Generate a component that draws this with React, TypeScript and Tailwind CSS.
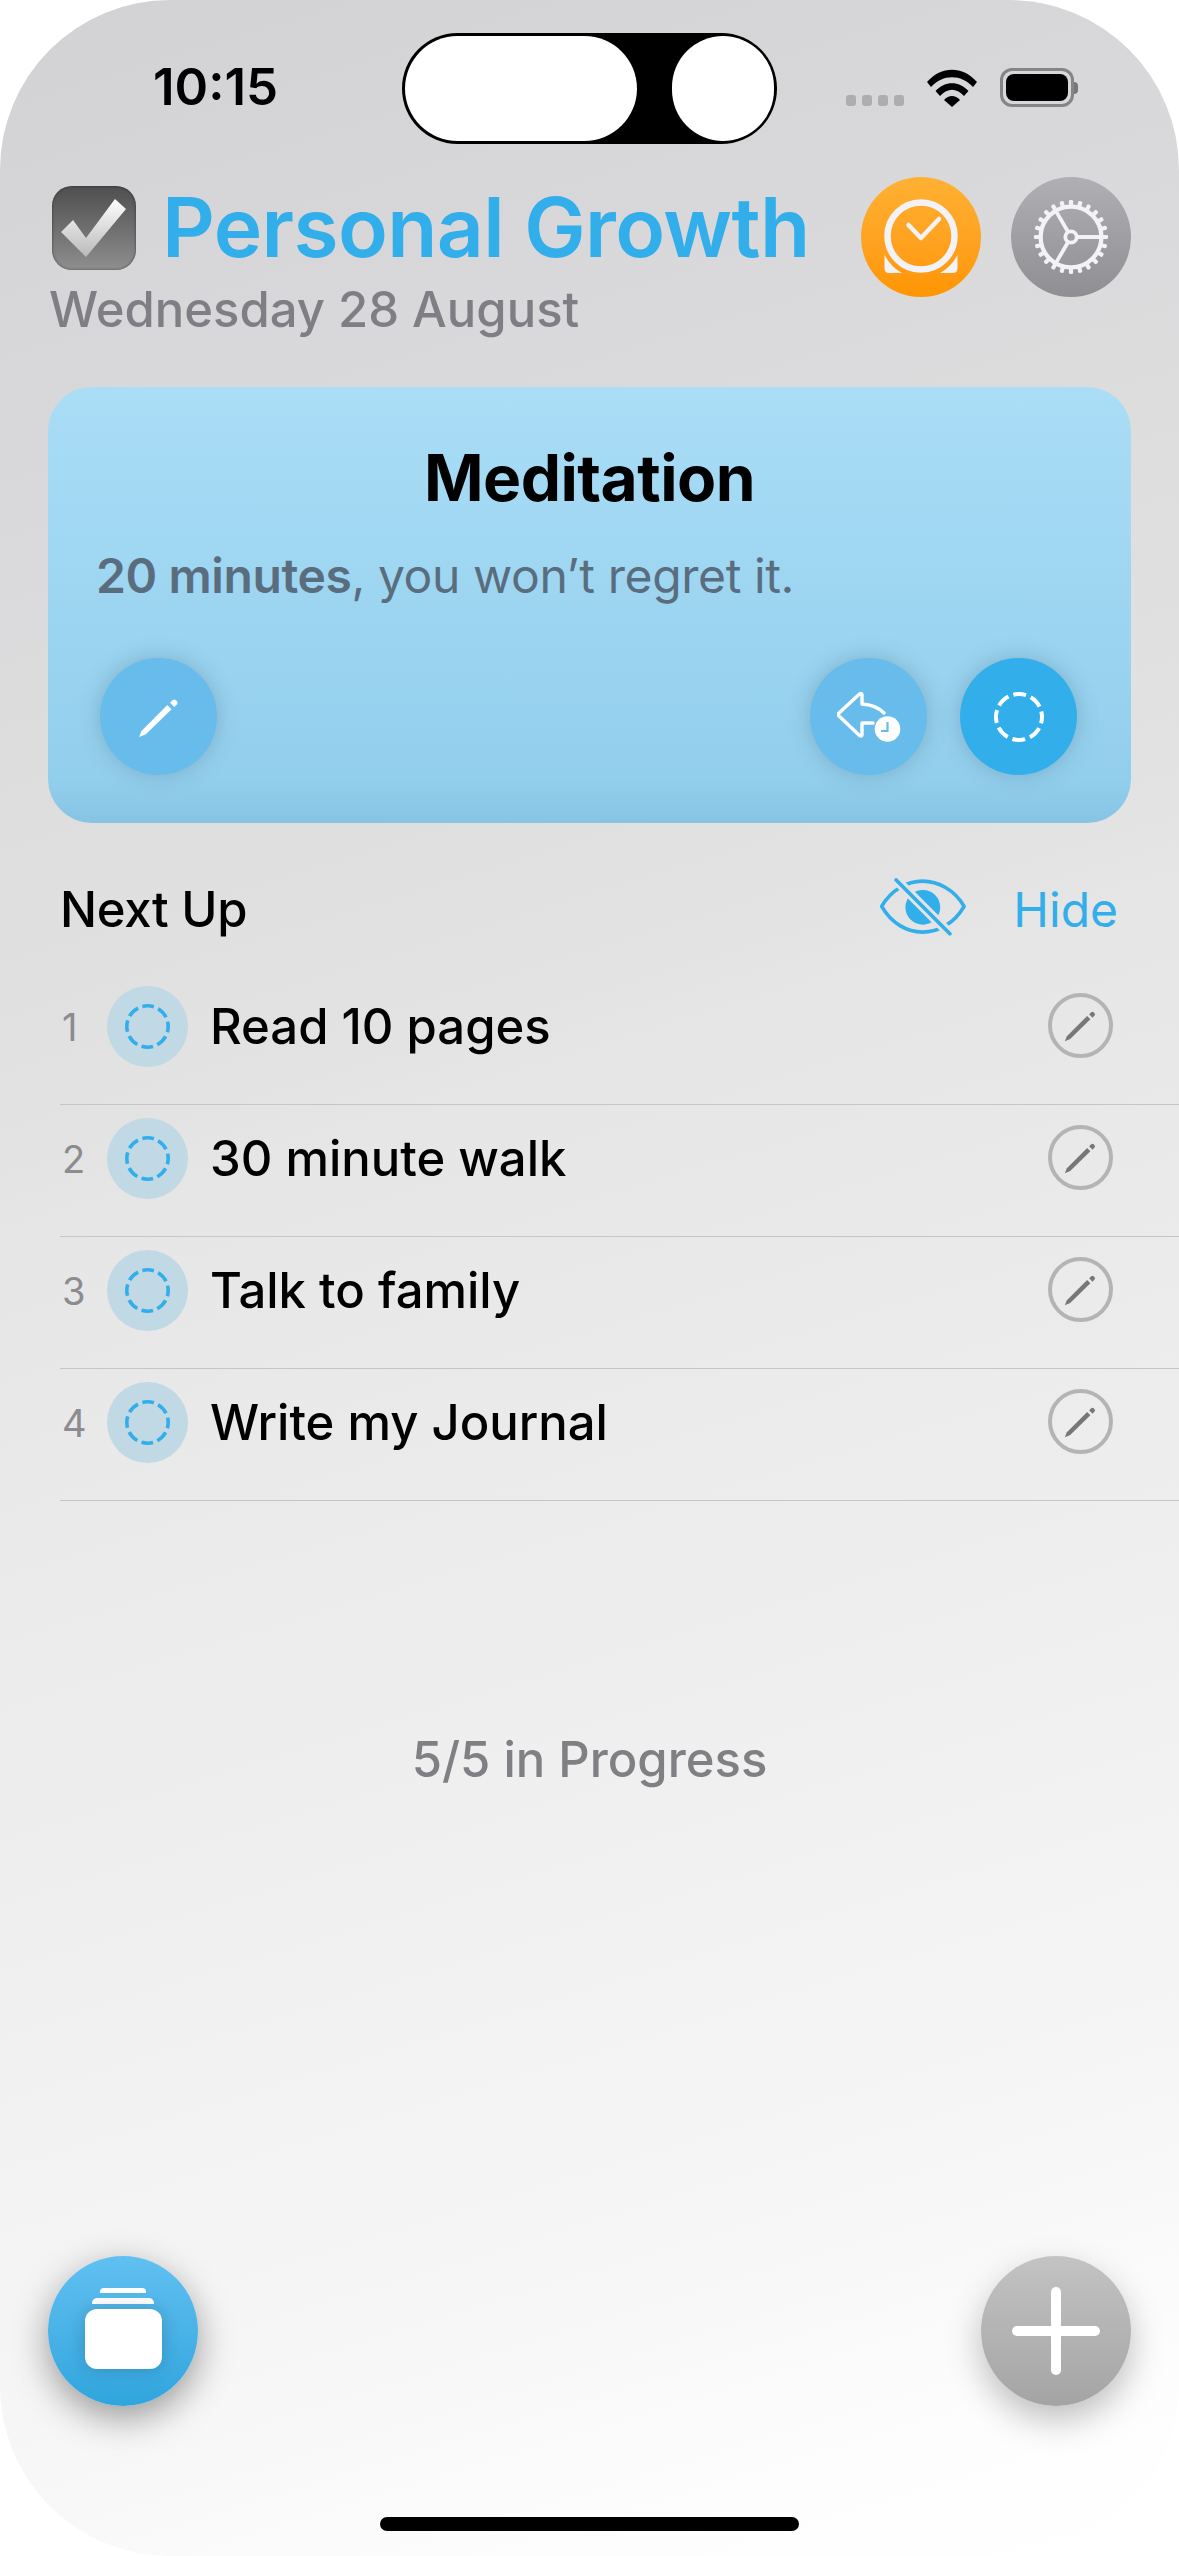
const tasks = ["Read 10 pages", "30 minute walk", "Talk to family", "Write my Journal"];

const gearTeeth = Array.from({ length: 24 }, (_, i) => i * 15);

const PencilIcon = ({ className }: { className: string }) => (
  <svg viewBox="0 0 40 40" className={className} fill="currentColor">
    <path d="M1 39 L3.5 33 L28 8.5 L32 12.5 L7.5 36.5 Z" />
    <path d="M30.5 6.5 L33 4 Q34.5 2.5 36 4 L37 5 Q38.5 6.5 37 8 L34.5 10.5 Z" />
  </svg>
);

const DashedCircle = ({ size, stroke, color }: { size: number; stroke: number; color: string }) => {
  const r = (size - stroke) / 2;
  const pitch = (2 * Math.PI * r) / 8;
  const dash = pitch * 0.72;
  return (
    <svg width={size} height={size} viewBox={`0 0 ${size} ${size}`} fill="none">
      <circle
        cx={size / 2}
        cy={size / 2}
        r={r}
        stroke={color}
        strokeWidth={stroke}
        strokeDasharray={`${dash} ${pitch - dash}`}
        strokeDashoffset={dash / 2}
      />
    </svg>
  );
};

const CheckTile = () => (
  <div className="w-[84px] h-[84px] shrink-0 rounded-[20px] bg-gradient-to-b from-[#4f4f4f] to-[#8f8f8f] shadow-[inset_0_0_3px_rgba(0,0,0,0.5)]">
    <svg viewBox="0 0 84 84" className="w-full h-full">
      <defs>
        <linearGradient id="checkFill" x1="0" y1="0" x2="0" y2="1">
          <stop offset="0" stopColor="#ffffff" />
          <stop offset="1" stopColor="#b9b9b9" />
        </linearGradient>
      </defs>
      <path d="M9 46 L21 34 L34 52 L63 13 L74 23 L34 71 Z" fill="url(#checkFill)" />
    </svg>
  </div>
);

const AlarmIcon = () => (
  <svg viewBox="0 0 80 84" className="w-[80px] h-[84px]" fill="none" stroke="#f2f2f7">
    <circle cx="40" cy="41" r="33.5" strokeWidth="6.5" />
    <path d="M27.5 30 L40 43 L58 24" strokeWidth="4.5" strokeLinecap="round" strokeLinejoin="round" />
    <path d="M3.5 60 Q10 72 21 78 H8 Q3.5 78 3.5 73 Z" fill="#f2f2f7" stroke="none" />
    <path d="M76.5 60 Q70 72 59 78 H72 Q76.5 78 76.5 73 Z" fill="#f2f2f7" stroke="none" />
  </svg>
);

const GearIcon = () => (
  <svg viewBox="0 0 80 80" className="w-[76px] h-[76px]" fill="none" stroke="#f2f2f7">
    <circle cx="40" cy="40" r="32" strokeWidth="4.5" />
    {gearTeeth.map((deg) => (
      <rect key={deg} x="37.8" y="1" width="4.4" height="8" rx="1.4" fill="#f2f2f7" stroke="none" transform={`rotate(${deg} 40 40)`} />
    ))}
    <circle cx="40" cy="40" r="6" strokeWidth="4" />
    <path d="M46 40 H72 M37 34.8 L24 12.5 M37 45.2 L24 67.5" strokeWidth="4" />
  </svg>
);

const SnoozeIcon = () => (
  <svg viewBox="0 0 64 52" className="w-[64px] h-[52px]" fill="none">
    <path
      d="M47 22 C41 16 34 13.5 25 13 V4 Q25 1.5 22.5 3 L2 22 Q0.5 23.5 2 25 L22.5 44.5 Q25 46 25 43.5 V32 H36"
      stroke="#fff"
      strokeWidth="3.4"
      strokeLinecap="round"
      strokeLinejoin="round"
    />
    <circle cx="50.5" cy="38" r="12.8" fill="#fff" />
    <path d="M50.5 31 V40 H44" stroke="#68bcec" strokeWidth="2.2" />
  </svg>
);

const EyeOffIcon = () => (
  <svg viewBox="0 0 90 60" className="w-[87px] h-[58px]" fill="none" strokeLinecap="round">
    <path
      d="M1.7 29.3 C12 12 28 3.3 44 3.3 C60 3.3 77 12 87 29.3 C77 47 60 56 44 56 C28 56 12 47 1.7 29.3 Z"
      stroke="#32aeea"
      strokeWidth="3.8"
      strokeLinejoin="round"
    />
    <circle cx="44.3" cy="30.3" r="18" fill="#32aeea" />
    <path d="M16.7 2 L72.3 57.7" stroke="#e3e3e4" strokeWidth="10" strokeLinecap="butt" />
    <path d="M16.7 2 L72.3 57.7" stroke="#32aeea" strokeWidth="3.8" />
  </svg>
);

const CardButton = ({ className, children }: { className: string; children: React.ReactNode }) => (
  <div className={`w-[117px] h-[117px] rounded-full flex items-center justify-center shadow-[0_0_22px_rgba(70,100,120,0.32)] ${className}`}>
    {children}
  </div>
);

const StatusBar = () => (
  <div className="h-[177px] shrink-0 flex items-start pt-[33px] pl-[153px]">
    <div className="w-[249px] pt-[23px] text-[51px] leading-[62px] font-semibold text-black">10:15</div>
    <div className="w-[375px] h-[111px] rounded-full bg-black flex items-center justify-between p-[3px]">
      <div className="w-[232px] h-full rounded-full bg-white" />
      <div className="w-[102px] h-full rounded-full bg-white" />
    </div>
    <div className="flex items-end ml-[69px] mt-[35px]">
      <div className="flex gap-[6px] mb-[1px]">
        <div className="w-[10px] h-[11px] rounded-[3px] bg-[#adadb0]" />
        <div className="w-[10px] h-[11px] rounded-[3px] bg-[#adadb0]" />
        <div className="w-[10px] h-[11px] rounded-[3px] bg-[#adadb0]" />
        <div className="w-[10px] h-[11px] rounded-[3px] bg-[#adadb0]" />
      </div>
      <svg viewBox="0 0 50 38" className="w-[50px] h-[38px] ml-[23px]">
        <path d="M0 13 C14 -3.5 36 -3.5 50 13 L46 18 C34 5 16 5 4 18 Z" />
        <path d="M8.5 22 C18 11.5 32 11.5 41.5 22 L37 27 C29 18.5 21 18.5 13 27 Z" />
        <path d="M17 31 C22 25.5 28 25.5 33 31 L25 38 Z" />
      </svg>
      <div className="flex items-center ml-[23px]">
        <div className="w-[74px] h-[39px] rounded-[12px] border-[3px] border-[#858585] p-[3px]">
          <div className="w-full h-full rounded-[8px] bg-black" />
        </div>
        <div className="w-[4px] h-[12px] rounded-r-full bg-[#777]" />
      </div>
    </div>
  </div>
);

const Header = () => (
  <div className="flex justify-between pl-[50px] pr-[48px] h-[120px]">
    <div className="pt-[9px]">
      <div className="flex items-center pl-[2px] gap-[26px]">
        <CheckTile />
        <span className="text-[82px] leading-[84px] font-semibold tracking-[-0.6px] text-[#32aeea] whitespace-nowrap">Personal Growth</span>
      </div>
      <div className="text-[49px] leading-[58px] font-medium text-[#7e7e84] mt-[11px] -ml-[1px] whitespace-nowrap">Wednesday 28 August</div>
    </div>
    <div className="flex gap-[30px]">
      <div className="w-[120px] h-[120px] rounded-full bg-gradient-to-b from-[#ffb133] to-[#ff9500] flex items-center justify-center">
        <AlarmIcon />
      </div>
      <div className="w-[120px] h-[120px] rounded-full bg-gradient-to-b from-[#b0b0b4] to-[#8f8f93] flex items-center justify-center">
        <GearIcon />
      </div>
    </div>
  </div>
);

const FocusCard = () => (
  <div className="mx-[48px] mt-[90px] h-[436px] rounded-[44px] bg-gradient-to-b from-[#aaddf6] via-[#92cfed] via-90% to-[#87c4e4] pt-[53px] px-[50px] flex flex-col">
    <div className="text-center text-[64px] leading-[76px] font-bold tracking-[-0.5px] text-black">Meditation</div>
    <div className="mt-[30px] -ml-[2px] text-[48px] leading-[60px] text-[#5a6d7e] -tracking-[0.4px] whitespace-nowrap">
      <span className="font-semibold">20 minutes</span>, you won’t regret it.
    </div>
    <div className="mt-[52px] flex items-center">
      <div className="ml-[2px]">
        <CardButton className="bg-[#68bcec] text-white">
          <PencilIcon className="w-[42px] h-[42px]" />
        </CardButton>
      </div>
      <div className="ml-auto mr-[4px] flex gap-[33px]">
        <CardButton className="bg-[#68bcec]">
          <SnoozeIcon />
        </CardButton>
        <CardButton className="bg-[#32aeea]">
          <DashedCircle size={50} stroke={4} color="#ffffff" />
        </CardButton>
      </div>
    </div>
  </div>
);

const NextUp = () => (
  <div className="mt-[55px] pl-[60px] pr-[61px] h-[64px] flex items-center">
    <span className="text-[49px] leading-[58px] font-[550] tracking-[-0.3px] text-black">Next Up</span>
    <div className="ml-auto -mt-[6px]">
      <EyeOffIcon />
    </div>
    <span className="ml-[46px] text-[48px] leading-[58px] text-[#32aeea]">Hide</span>
  </div>
);

const TaskRow = ({ index, title }: { index: number; title: string }) => (
  <div className="ml-[60px] h-[132px] pb-[24px] border-b border-[#c6c6c8] flex items-center pr-[66px]">
    <span className="w-[47px] pl-[2px] text-[38px] leading-[44px] text-[#8b8b90]">{index}</span>
    <div className="w-[81px] h-[81px] rounded-full bg-[#c1d8e5] flex items-center justify-center">
      <DashedCircle size={45} stroke={3.6} color="#32aeea" />
    </div>
    <span className="ml-[22px] text-[49px] leading-[58px] font-[550] text-black">{title}</span>
    <div className="ml-auto -mt-[2px] w-[65px] h-[65px] rounded-full border-4 border-[#b4b4b6] text-[#77777a] flex items-center justify-center">
      <PencilIcon className="w-[33px] h-[33px]" />
    </div>
  </div>
);

const App = () => {
  return (
    <div className="w-[1179px] h-[2556px] bg-white overflow-hidden font-['Inter','Liberation_Sans',sans-serif]">
      <div className="w-full h-full rounded-[170px] bg-[linear-gradient(163deg,#d2d2d5_0%,#dededf_29%,#e3e3e4_40%,#e6e6e7_43%,#f4f4f4_79%,#f8f8f8_87%,#fdfdfd_93%,#ffffff_100%)] flex flex-col">
        <StatusBar />
        <Header />
        <FocusCard />
        <NextUp />
        <div className="mt-[31px]">
          {tasks.map((title, i) => (
            <TaskRow key={title} index={i + 1} title={title} />
          ))}
        </div>
        <div className="mt-[230px] text-center text-[49px] leading-[58px] font-[550] text-[#808084]">5/5 in Progress</div>
        <div className="mt-auto px-[48px] flex justify-between">
          <div className="w-[150px] h-[150px] rounded-full bg-gradient-to-b from-[#60c0f2] to-[#2fa5dd] shadow-[0_12px_36px_rgba(0,0,0,0.38)] flex flex-col items-center justify-center pb-[5px]">
            <div className="w-[46px] h-[5px] rounded-t-[4px] bg-white" />
            <div className="w-[62px] h-[6px] rounded-t-[5px] bg-white mt-[5px]" />
            <div className="w-[77px] h-[60px] rounded-[12px] bg-white mt-[5px] shadow-[0_0_18px_rgba(0,0,0,0.18)]" />
          </div>
          <div className="relative w-[150px] h-[150px] rounded-full bg-gradient-to-b from-[#c3c3c3] to-[#a4a4a4] shadow-[0_14px_34px_rgba(0,0,0,0.25)] flex items-center justify-center">
            <div className="w-[88px] h-[10px] rounded-full bg-white" />
            <div className="absolute w-[10px] h-[88px] rounded-full bg-white" />
          </div>
        </div>
        <div className="mt-[111px] mb-[25px] mx-auto w-[419px] h-[14px] rounded-full bg-black" />
      </div>
    </div>
  );
};

export default App;
